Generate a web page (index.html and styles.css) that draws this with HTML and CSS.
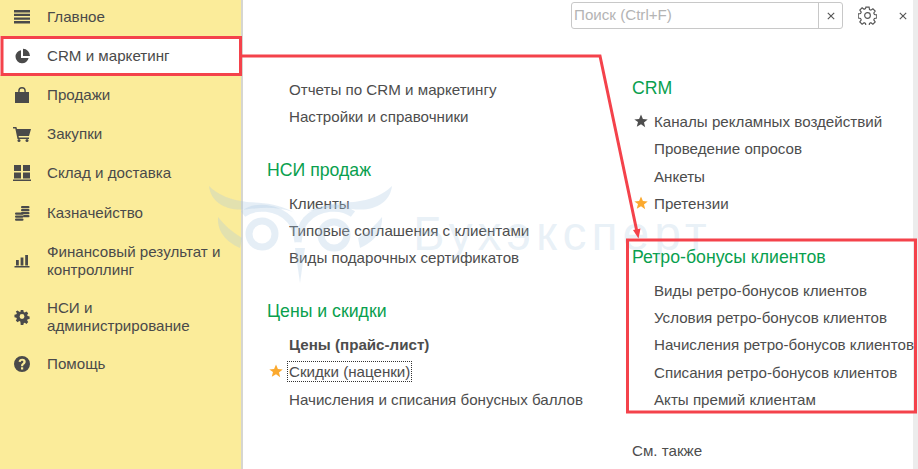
FILE: index.html
```html
<!DOCTYPE html>
<html lang="ru">
<head>
<meta charset="utf-8">
<title>CRM и маркетинг</title>
<link rel="stylesheet" href="styles.css">
</head>
<body>
<div class="app">
  <nav class="sidebar">
    <a class="nav-item"><svg class="nav-icon" viewBox="0 0 16 16"><path d="M0 1h16v2.400H0zM0 4.700h16v2.400H0zM0 8.400h16v2.400H0zM0 12.100h16v2.400H0z"/></svg><span>Главное</span></a>
    <a class="nav-item active"><svg class="nav-icon" viewBox="0 0 16 16"><path d="M7 2.200A6.600 6.600 0 1 0 14.600 10H7z"/><path d="M9 .8v7.300h7A7.300 7.300 0 0 0 9 .8z"/></svg><span>CRM и маркетинг</span></a>
    <a class="nav-item"><svg class="nav-icon" viewBox="0 0 16 16"><path d="M1 5h3.200V3.800a3.800 3.800 0 0 1 7.600 0V5H15v11H1zM5.600 5h4.800V3.800a2.400 2.400 0 0 0-4.800 0z"/></svg><span>Продажи</span></a>
    <a class="nav-item"><svg class="nav-icon wide" viewBox="0 0 18 16"><path d="M0 1h3.400l.6 2H18l-2 7H5.600l.3 1.400H16V13H4.500L2.300 2.600H0z"/><circle cx="6" cy="14.500" r="1.500"/><circle cx="14" cy="14.500" r="1.500"/></svg><span>Закупки</span></a>
    <a class="nav-item"><svg class="nav-icon wide" viewBox="0 0 18 16"><path d="M1 0h7v6H1zM10 0h7v6h-7zM1 7.500h7v6H1zM10 7.500h7v6h-7zM0 14.500h18V16H0z"/></svg><span>Склад и доставка</span></a>
    <a class="nav-item"><svg class="nav-icon" viewBox="0 0 16 16"><rect x="7" y="1" width="8.500" height="2.300" rx="1.100"/><rect x="7" y="4" width="8.500" height="2.300" rx="1.100"/><rect x="7" y="7" width="8.500" height="2.300" rx="1.100"/><rect x="9" y="10" width="6.500" height="2.300" rx="1.100"/><rect x="1" y="7.500" width="8.500" height="2.300" rx="1.100"/><rect x="1" y="10.500" width="8.500" height="2.300" rx="1.100"/><rect x="1" y="13.500" width="8.500" height="2.300" rx="1.100"/></svg><span>Казначейство</span></a>
    <a class="nav-item tall"><svg class="nav-icon" viewBox="0 0 16 16"><path d="M2 7h2.800v5.500H2zM6.600 4.500h2.800v8H6.600zM11.200 2h2.800v10.500h-2.800zM.5 13h15v1.400H.5z"/></svg><span>Финансовый результат и контроллинг</span></a>
    <a class="nav-item tall-b"><svg class="nav-icon" viewBox="0 0 16 16"><path fill-rule="evenodd" d="M6.500 0h3l.5 2.300 1.300.6 2-1.300 2.100 2.100-1.300 2 .6 1.300 2.300.5v3l-2.300.5-.6 1.300 1.300 2-2.100 2.100-2-1.300-1.300.6-.5 2.300h-3L6 13.700l-1.300-.6-2 1.300L.6 12.300l1.300-2-.6-1.300L-1 8.500v-3l2.300-.5.600-1.300-1.300-2L2.700.6l2 1.300L6 2.300zM8 4.700a2.900 2.900 0 1 0 0 5.800 2.900 2.900 0 0 0 0-5.800z" transform="translate(1.300 1.100) scale(.84)"/></svg><span>НСИ и<br>администрирование</span></a>
    <a class="nav-item"><svg class="nav-icon" viewBox="0 0 16 16"><path fill-rule="evenodd" d="M8 0a8 8 0 1 1 0 16A8 8 0 0 1 8 0zM7 11.200v2.200h2.200v-2.200zM8.200 2.800c-2 0-3.400 1-3.600 3l2.100.3c.1-.9.6-1.400 1.400-1.400.8 0 1.300.4 1.300 1.100 0 .6-.4 1-1 1.500-.9.700-1.300 1.300-1.300 2.500v.4h2.100v-.3c0-.6.200-.9.900-1.400 1-.8 1.600-1.500 1.600-2.800 0-1.800-1.300-2.900-3.500-2.900z"/></svg><span>Помощь</span></a>
  </nav>

  <main class="content">
    <header class="topbar">
      <div class="search">
        <span class="search-input">Поиск (Ctrl+F)</span>
        <span class="search-clear"><svg viewBox="0 0 10 10"><path d="M1 1l8 8M9 1l-8 8"/></svg></span>
      </div>
      <svg class="gear" viewBox="0 0 20 20"><path d="M8.300 1.200h3.400l.4 2.500 1.500.7 2.100-1.500 2.400 2.400-1.500 2.100.7 1.500 2.500.4v3.400l-2.500.4-.7 1.500 1.500 2.100-2.400 2.400-2.100-1.500-1.500.7-.4 2.500H8.300l-.4-2.500-1.500-.7-2.100 1.500-2.400-2.400 1.500-2.100-.7-1.500-2.500-.4V8.300l2.500-.4.700-1.500-1.500-2.100L4.300 1.900l2.100 1.500 1.500-.7z"/><circle cx="10" cy="10" r="3"/></svg>
      <svg class="close" viewBox="0 0 10 10"><path d="M1 1l8 8M9 1l-8 8"/></svg>
    </header>

    <div class="columns">
      <section class="col col-left">
        <ul class="links">
          <li>Отчеты по CRM и маркетингу</li>
          <li>Настройки и справочники</li>
        </ul>
        <h2>НСИ продаж</h2>
        <ul class="links">
          <li>Клиенты</li>
          <li>Типовые соглашения с клиентами</li>
          <li>Виды подарочных сертификатов</li>
        </ul>
        <h2>Цены и скидки</h2>
        <ul class="links">
          <li class="bold">Цены (прайс-лист)</li>
          <li class="starred"><svg class="star orange" viewBox="0 0 14 14"><path d="M7 .5l1.900 4.500 4.800.4-3.700 3.100 1.200 4.700L7 10.200l-4.200 2.500L4 8 .3 5.400l4.800-.4z"/></svg><span class="focused">Скидки (наценки)</span></li>
          <li>Начисления и списания бонусных баллов</li>
        </ul>
      </section>

      <section class="col col-right">
        <h2 class="first">CRM</h2>
        <ul class="links">
          <li class="starred"><svg class="star grey" viewBox="0 0 14 14"><path d="M7 .5l1.900 4.500 4.800.4-3.700 3.100 1.200 4.700L7 10.200l-4.200 2.500L4 8 .3 5.400l4.800-.4z"/></svg>Каналы рекламных воздействий</li>
          <li>Проведение опросов</li>
          <li>Анкеты</li>
          <li class="starred"><svg class="star orange" viewBox="0 0 14 14"><path d="M7 .5l1.900 4.500 4.800.4-3.700 3.100 1.200 4.700L7 10.200l-4.200 2.500L4 8 .3 5.400l4.800-.4z"/></svg>Претензии</li>
        </ul>
        <h2>Ретро-бонусы клиентов</h2>
        <ul class="links">
          <li>Виды ретро-бонусов клиентов</li>
          <li>Условия ретро-бонусов клиентов</li>
          <li>Начисления ретро-бонусов клиентов</li>
          <li>Списания ретро-бонусов клиентов</li>
          <li>Акты премий клиентам</li>
        </ul>
        <p class="see-also">См. также</p>
      </section>
    </div>
  </main>
</div>

<div class="watermark" aria-hidden="true">
  <svg class="wm-logo" viewBox="205 183 195 105">
    <g class="wm-rings">
      <circle cx="262" cy="234" r="13"/>
      <circle cx="334" cy="235" r="13"/>
      <path d="M243 214c12-9 34-8 47 6 5 6 7 14 8 22M353 214c-12-9-34-8-47 6-5 6-7 14-8 22"/>
    </g>
    <path class="wm-fill" d="M209 186c9 9 22 14 38 16 16 1 30 1 46 10-14-5-28-5-44-3-22 3-38-6-40-23z"/>
    <path class="wm-fill" d="M392 186c-9 9-22 14-38 16-16 1-30 1-46 10 14-5 28-5 44-3 22 3 38-6 40-23z"/>
    <path class="wm-fill" d="M218 217c6 8 14 15 24 21l-2 10c-14-6-23-17-22-31z"/>
    <path class="wm-fill" d="M382 217c-6 8-14 15-24 21l2 10c14-6 23-17 22-31z"/>
    <path class="wm-fill" d="M295 248h10l-5 35z"/>
  </svg>
  <span class="wm-text">Бухэксперт</span>
</div>

<svg class="annotation" viewBox="0 0 918 469">
  <rect class="box" x="2" y="37.500" width="238.500" height="37"/>
  <polyline class="box" points="241,56 600,56 637,232"/>
  <path class="arrow" d="M633 230l7.500-1.500-2 10z"/>
  <rect class="box" x="627.500" y="240" width="288" height="172"/>
</svg>
```

FILE: styles.css
```css
* { box-sizing: border-box; }
html, body { margin: 0; height: 100%; overflow: hidden; background: #fff; }
body { font-family: "Liberation Sans", Arial, sans-serif; font-size: 15.150px; color: #4d4d4d; position: relative; }

.app { display: flex; width: 918px; height: 469px; }

.sidebar {
  width: 243px;
  flex: none;
  background: #fbec9a;
  border-right: 2px solid #d6d6d0;
  display: flex;
  flex-direction: column;
  margin-top: -3px;
}
.nav-item {
  display: flex;
  align-items: center;
  height: 39.200px;
  padding-left: 14px;
  line-height: 18px;
  color: #4a4a4a;
}
.nav-item.tall { height: 58px; }
.nav-item.tall-b { height: 54px; }
.nav-item.active { background: #fff; }
.nav-item span { margin-left: 17px; }
.nav-icon { width: 16px; height: 16px; fill: #4a4a4a; flex: none; }
.nav-icon.wide { width: 18px; margin-left: -1px; margin-right: -1px; }

.content { flex: 1; position: relative; border-right: 5px solid #ececec; min-width: 0; }

.topbar { display: flex; align-items: flex-start; height: 36px; padding: 2px 0 0 328px; }
.search {
  display: flex;
  width: 272px;
  height: 27px;
  border: 1px solid #c8c8c8;
  border-radius: 3px;
  background: #fff;
}
.search-input { flex: 1; padding-left: 2px; line-height: 24px; color: #b4b4b4; }
.search-clear { width: 24px; border-left: 1px solid #c8c8c8; display: flex; align-items: center; justify-content: center; }
.search-clear svg { width: 8px; height: 8px; fill: none; stroke: #555; stroke-width: 1.400; }
.gear { width: 19px; height: 19px; margin: 4px 0 0 15px; fill: none; stroke: #555; stroke-width: 1.200; flex: none; }
.close { width: 8px; height: 8px; margin: 10px 0 0 22px; fill: none; stroke: #555; stroke-width: 1.400; flex: none; }

.columns { display: flex; padding-top: 39.500px; position: relative; z-index: 1; }
.col-left { width: 389px; padding-left: 24px; flex: none; }
.col-right { flex: 1; }

h2 { margin: 0; font-size: 17.700px; font-weight: 400; color: #09a04e; line-height: 20px; padding: 30px 0 9.500px; }
h2.first { padding: 0 0 10px; margin-top: 2.500px; }

.links { list-style: none; margin: 0; padding: 0 0 0 22px; }
.links li { height: 27.300px; line-height: 27px; white-space: nowrap; position: relative; }
.bold { font-weight: 700; }
.star { position: absolute; left: -20px; top: 6px; width: 14px; height: 14px; }
.star.orange { fill: #fba92e; }
.star.grey { fill: #4d4d4d; }
.focused { outline: 1px dotted #333; outline-offset: 1px; }
.see-also { margin: 28.500px 0 0; line-height: 18px; }

.watermark { position: absolute; left: 205px; top: 183px; display: flex; pointer-events: none; z-index: 2; }
.wm-logo { width: 195px; height: 105px; flex: none; }
.wm-rings { fill: none; stroke: rgba(170, 200, 225, .3); stroke-width: 7; }
.wm-fill { fill: rgba(170, 200, 225, .3); }
.wm-text { font-size: 48px; line-height: 48px; color: rgba(170, 200, 225, .26); margin: 27px 0 0 13px; letter-spacing: 5px; white-space: nowrap; }

.annotation { position: absolute; left: 0; top: 0; width: 918px; height: 469px; pointer-events: none; z-index: 3; }
.box { fill: none; stroke: #f4424b; stroke-width: 3; }
.arrow { fill: #f4424b; }
```
